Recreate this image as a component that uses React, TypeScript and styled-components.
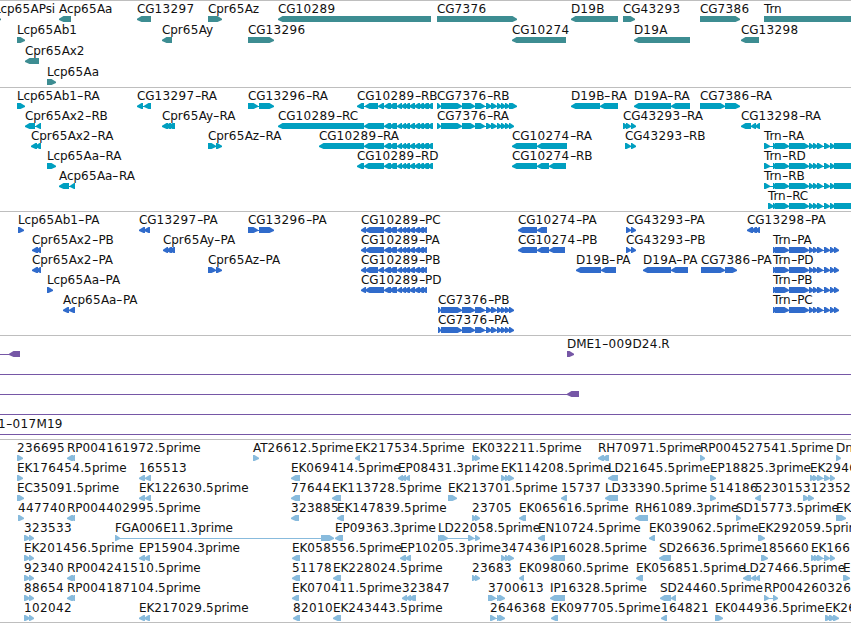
import React from 'react'
import styled, { createGlobalStyle } from 'styled-components'

type Strand = '<' | '>' | '-'

// label, strand, flat list of block start/end pairs, optional left edge
type Feature = [string, Strand, number[], number?]

interface TrackData {
  name: string
  color: string
  pitch: number
  height: number
  rows: Feature[][]
}

const GlobalStyle = createGlobalStyle`
  body {
    margin: 0;
    background: #fff;
    overflow: hidden;
  }
`

const Browser = styled.main`
  display: flex;
  flex-direction: column;
  width: 851px;
  height: 623px;
  overflow: hidden;
  border-bottom: 1px solid #bebebe;
  box-sizing: border-box;
  font-family: 'DejaVu Sans', sans-serif;
  font-size: 12px;
  line-height: 14px;
  letter-spacing: -0.1px;
  color: #111;
`

const Track = styled.section<{ $height: number }>`
  flex: none;
  box-sizing: border-box;
  height: ${p => p.$height}px;
  border-top: 1px solid #bebebe;
`

const Row = styled.div<{ $pitch: number }>`
  position: relative;
  height: ${p => p.$pitch}px;
`

const Item = styled.div`
  position: absolute;
  top: 0;
`

const Label = styled.div`
  height: 15px;
  padding-top: 1px;
  box-sizing: border-box;
  white-space: nowrap;
`

const Digits = styled.span`
  letter-spacing: 0.365px;
`

const Hyphen = styled.span`
  display: inline-block;
  margin: 0 1.2px;
  transform: scaleX(1.5);
`

const Glyph = styled.svg<{ $color: string }>`
  display: block;
  height: 6px;
  overflow: visible;
  fill: ${p => p.$color};
`

const HEAD = 4.5

const tail = [384, 391, 389, 397, 397, 402, 401, 406, 404, 410, 409, 415, 414, 420, 418, 424, 422, 427]
const tailR = [...tail.slice(0, -1), 429, 427, 433]
const cg7376 = [441, 462, 462, 475, 475, 485, 486, 492, 491, 497, 497, 502, 501, 506, 505, 510]
const trn = [773, 776, 775, 789, 789, 809, 809, 814, 813, 818, 817, 823, 824, 830, 830, 835]
const trnR = [...trn, 834, 870]
const trnP = [...trn, 834, 839]

const tracks: TrackData[] = [
  {
    name: 'genes',
    color: '#3d8d92',
    pitch: 21,
    height: 87,
    rows: [
      [
        ['Lcp65APsi', '>', [-6, 1]],
        ['Acp65Aa', '<', [59, 71]],
        ['CG13297', '<', [137, 151]],
        ['Cpr65Az', '>', [208, 222]],
        ['CG10289', '<', [278, 431]],
        ['CG7376', '>', [437, 517]],
        ['D19B', '<', [571, 618]],
        ['CG43293', '>', [623, 635]],
        ['CG7386', '>', [700, 740]],
        ['Trn', '>', [764, 870]],
      ],
      [
        ['Lcp65Ab1', '>', [17, 25]],
        ['Cpr65Ay', '<', [162, 172]],
        ['CG13296', '>', [248, 274]],
        ['CG10274', '<', [512, 566]],
        ['D19A', '<', [634, 690]],
        ['CG13298', '<', [741, 759]],
      ],
      [['Cpr65Ax2', '<', [25, 39]]],
      [['Lcp65Aa', '>', [47, 56]]],
    ],
  },
  {
    name: 'transcripts',
    color: '#009fc0',
    pitch: 20,
    height: 124,
    rows: [
      [
        ['Lcp65Ab1-RA', '>', [17, 25]],
        ['CG13297-RA', '<', [137, 143, 144, 151]],
        ['CG13296-RA', '>', [248, 258, 259, 274]],
        ['CG10289-RB', '<', [357, 364, 365, 378, 378, 384, ...tailR]],
        ['CG7376-RB', '>', [437, 441, ...cg7376, 509, 517]],
        ['D19B-RA', '<', [571, 600, 600, 618]],
        ['D19A-RA', '<', [634, 671, 671, 690]],
        ['CG7386-RA', '>', [700, 725, 725, 740]],
      ],
      [
        ['Cpr65Ax2-RB', '<', [25, 35, 36, 41]],
        ['Cpr65Ay-RA', '<', [162, 168, 165, 171, 168, 175]],
        ['CG10289-RC', '<', [278, 364, 364, 384, ...tailR]],
        ['CG7376-RA', '>', [437, 441, ...cg7376, 509, 514]],
        ['CG43293-RA', '>', [623, 628, 626, 631, 631, 636]],
        ['CG13298-RA', '<', [741, 751, 751, 756, 755, 760]],
      ],
      [
        ['Cpr65Ax2-RA', '<', [31, 37, 35, 41]],
        ['Cpr65Az-RA', '>', [208, 216, 216, 222]],
        ['CG10289-RA', '<', [319, 364, 364, 384, ...tailR]],
        ['CG10274-RA', '<', [512, 537, 537, 567]],
        ['CG43293-RB', '>', [625, 631, 631, 636]],
        ['Trn-RA', '>', [764, 770, ...trnR]],
      ],
      [
        ['Lcp65Aa-RA', '>', [47, 56]],
        ['CG10289-RD', '<', [357, 364, 364, 384, ...tailR]],
        ['CG10274-RB', '<', [512, 537, 537, 549, 549, 566]],
        ['Trn-RD', '>', [764, 770, ...trnR]],
      ],
      [
        ['Acp65Aa-RA', '<', [59, 69, 70, 75]],
        ['Trn-RB', '>', [764, 770, ...trnR]],
      ],
      [['Trn-RC', '>', [768, 774, ...trnR]]],
    ],
  },
  {
    name: 'proteins',
    color: '#306bcb',
    pitch: 20,
    height: 124,
    rows: [
      [
        ['Lcp65Ab1-PA', '>', [18, 24]],
        ['CG13297-PA', '<', [139, 145, 144, 150]],
        ['CG13296-PA', '>', [248, 258, 259, 274]],
        ['CG10289-PC', '<', [361, 366, 365, 384, ...tail]],
        ['CG10274-PA', '<', [518, 537, 537, 547]],
        ['CG43293-PA', '>', [626, 631, 631, 636]],
        ['CG13298-PA', '<', [747, 753, 751, 757, 755, 760]],
      ],
      [
        ['Cpr65Ax2-PB', '<', [32, 38, 36, 41]],
        ['Cpr65Ay-PA', '<', [163, 168, 166, 172, 169, 175]],
        ['CG10289-PA', '<', [361, 366, 365, 384, ...tail]],
        ['CG10274-PB', '<', [518, 537, 537, 549, 549, 565]],
        ['CG43293-PB', '>', [626, 631, 631, 636]],
        ['Trn-PA', '>', trnP],
      ],
      [
        ['Cpr65Ax2-PA', '<', [32, 38, 36, 41]],
        ['Cpr65Az-PA', '>', [208, 216, 216, 222]],
        ['CG10289-PB', '<', [361, 366, 365, 378, 378, 384, ...tail]],
        ['D19B-PA', '<', [576, 601, 601, 616]],
        ['D19A-PA', '<', [643, 671, 671, 688]],
        ['CG7386-PA', '>', [701, 725, 725, 737]],
        ['Trn-PD', '>', trnP],
      ],
      [
        ['Lcp65Aa-PA', '>', [47, 53]],
        ['CG10289-PD', '<', [361, 366, 365, 384, ...tail]],
        ['Trn-PB', '>', trnP],
      ],
      [
        ['Acp65Aa-PA', '<', [63, 69, 69, 75]],
        ['CG7376-PB', '>', [438, 441, ...cg7376, 509, 514]],
        ['Trn-PC', '>', trnP],
      ],
      [['CG7376-PA', '>', [438, 441, ...cg7376, 509, 514]]],
    ],
  },
  {
    name: 'clones',
    color: '#7657a6',
    pitch: 20,
    height: 104,
    rows: [
      [
        ['', '<', [9, 20], 0],
        ['DME1-009D24.R', '>', [567, 574]],
      ],
      [['', '-', [0, 851]]],
      [['', '<', [567, 579], 0]],
      [['', '-', [0, 851]]],
      [['1-017M19', '-', [-2, 851]]],
    ],
  },
  {
    name: 'ests',
    color: '#88bbdd',
    pitch: 20,
    height: 183,
    rows: [
      [
        ['236695', '>', [17, 23]],
        ['RP004161972.5prime', '<', [67, 73, 70, 75]],
        ['AT26612.5prime', '>', [253, 259]],
        ['EK217534.5prime', '<', [355, 360]],
        ['EK032211.5prime', '>', [472, 477, 475, 480]],
        ['RH70971.5prime', '<', [598, 604, 602, 609]],
        ['RP004527541.5prime', '>', [700, 705]],
        ['Dn', '>', [836, 841]],
      ],
      [
        ['EK176454.5prime', '>', [17, 23]],
        ['165513', '<', [139, 145, 145, 151]],
        ['EK069414.5prime', '<', [291, 300]],
        ['EP08431.3prime', '<', [398, 403, 401, 406, 405, 410]],
        ['EK114208.5prime', '>', [501, 506, 505, 510, 508, 514]],
        ['LD21645.5prime', '<', [608, 618]],
        ['EP18825.3prime', '>', [710, 716]],
        ['EK2946', '>', [810, 815, 813, 818, 817, 823, 824, 830, 830, 835]],
      ],
      [
        ['EC35091.5prime', '>', [17, 24]],
        ['EK122630.5prime', '<', [139, 145, 145, 151]],
        ['77644', '<', [291, 300]],
        ['EK113728.5prime', '<', [332, 341]],
        ['EK213701.5prime', '>', [448, 457]],
        ['15737', '<', [561, 567]],
        ['LD33390.5prime', '<', [605, 618]],
        ['514186', '>', [710, 716]],
        ['523015', '<', [755, 761]],
        ['312352', '>', [803, 809, 808, 814]],
      ],
      [
        ['447740', '>', [18, 24]],
        ['RP004402995.5prime', '<', [67, 73, 70, 75]],
        ['323885', '<', [291, 299]],
        ['EK147839.5prime', '<', [337, 344]],
        ['23705', '>', [472, 477, 475, 480]],
        ['EK065616.5prime', '<', [519, 526]],
        ['RH61089.3prime', '<', [635, 648]],
        ['SD15773.5prime', '>', [736, 741]],
        ['EK', '>', [836, 846]],
      ],
      [
        ['323533', '>', [24, 30, 29, 34]],
        ['FGA006E11.3prime', '>', [115, 120, 321, 334]],
        ['EP09363.3prime', '<', [335, 343]],
        ['LD22058.5prime', '>', [438, 443, 440, 448, 468, 474, 475, 480]],
        ['EN10724.5prime', '<', [538, 545]],
        ['EK039062.5prime', '<', [649, 655]],
        ['EK292059.5prim', '>', [758, 765]],
      ],
      [
        ['EK201456.5prime', '>', [24, 30, 29, 34]],
        ['EP15904.3prime', '<', [139, 145, 144, 150]],
        ['EK058556.5prime', '<', [292, 300]],
        ['EP10205.3prime', '<', [400, 406, 405, 411]],
        ['347436', '>', [501, 506, 505, 510, 508, 514]],
        ['IP16028.5prime', '<', [550, 565]],
        ['SD26636.5prime', '<', [659, 671]],
        ['185660', '>', [761, 768]],
        ['EK166', '>', [811, 816, 814, 819, 817, 823, 824, 830, 830, 835]],
      ],
      [
        ['92340', '>', [24, 30, 29, 34]],
        ['RP004241510.5prime', '<', [67, 73, 70, 75]],
        ['51178', '<', [292, 300]],
        ['EK228024.5prime', '<', [333, 341]],
        ['23683', '>', [472, 477, 475, 480]],
        ['EK098060.5prime', '<', [519, 524]],
        ['EK056851.5prime', '<', [636, 643]],
        ['LD27466.5prime', '<', [743, 751, 751, 756, 755, 760]],
        ['E', '>', [843, 850]],
      ],
      [
        ['88654', '>', [24, 30, 29, 34]],
        ['RP004187104.5prime', '<', [67, 73, 70, 75]],
        ['EK070411.5prime', '<', [292, 299]],
        ['323847', '<', [402, 407, 406, 411, 409, 416]],
        ['3700613', '>', [488, 496, 497, 502, 499, 505]],
        ['IP16328.5prime', '<', [550, 565]],
        ['SD24460.5prime', '<', [660, 671, 671, 676]],
        ['RP004260326', '>', [764, 769, 773, 778]],
      ],
      [
        ['102042', '>', [24, 30, 29, 34]],
        ['EK217029.5prime', '<', [139, 145, 144, 150]],
        ['82010', '<', [293, 300]],
        ['EK243443.5prime', '<', [333, 341]],
        ['2646368', '>', [490, 496, 497, 502, 499, 505]],
        ['EK097705.5prime', '<', [551, 558]],
        ['164821', '<', [661, 667]],
        ['EK044936.5prime', '>', [715, 723]],
        ['EK26', '>', [825, 831, 829, 835, 833, 839]],
      ],
    ],
  },
]

// short blocks taper from a blunt back edge, long ones from a full bar
const arrow = (strand: Strand, start: number, end: number) => {
  const head = Math.min(HEAD, end - start - 1)
  return strand === '>'
    ? `M${start} 0H${end - head}L${end} 2.8V4L${end - head} 6H${start}Z`
    : `M${end} 0H${start + head}L${start} 2.8V4L${start + head} 6H${end}Z`
}

const renderPart = (part: string, i: number) => {
  if (part === '-') return <Hyphen key={i}>{part}</Hyphen>
  return /^\d/.test(part) ? <Digits key={i}>{part}</Digits> : part
}

const FeatureItem = ({ feature, color }: { feature: Feature; color: string }) => {
  const [label, strand, blocks, from] = feature
  const start = from ?? blocks[0]
  const end = blocks[blocks.length - 1]
  const arrows: string[] = []

  if (strand !== '-') {
    for (let i = 0; i < blocks.length; i += 2) {
      const [a, b] = [blocks[i] - start, blocks[i + 1] - start]
      arrows.push(arrow(strand, a, b))
    }
  }

  return (
    <Item style={{ left: start }}>
      <Label>{label.split(/(\d+|-)/).map(renderPart)}</Label>
      <Glyph $color={color} width={end - start}>
        <rect x={0} y={3} width={end - start} height={1} />
        {arrows.map((d, i) => (
          <path key={i} d={d} />
        ))}
      </Glyph>
    </Item>
  )
}

const App = () => (
  <>
    <GlobalStyle />
    <Browser>
      {tracks.map(track => (
        <Track key={track.name} $height={track.height}>
          {track.rows.map((row, i) => (
            <Row key={i} $pitch={track.pitch}>
              {row.map((feature, j) => (
                <FeatureItem key={j} feature={feature} color={track.color} />
              ))}
            </Row>
          ))}
        </Track>
      ))}
    </Browser>
  </>
)

export default App
